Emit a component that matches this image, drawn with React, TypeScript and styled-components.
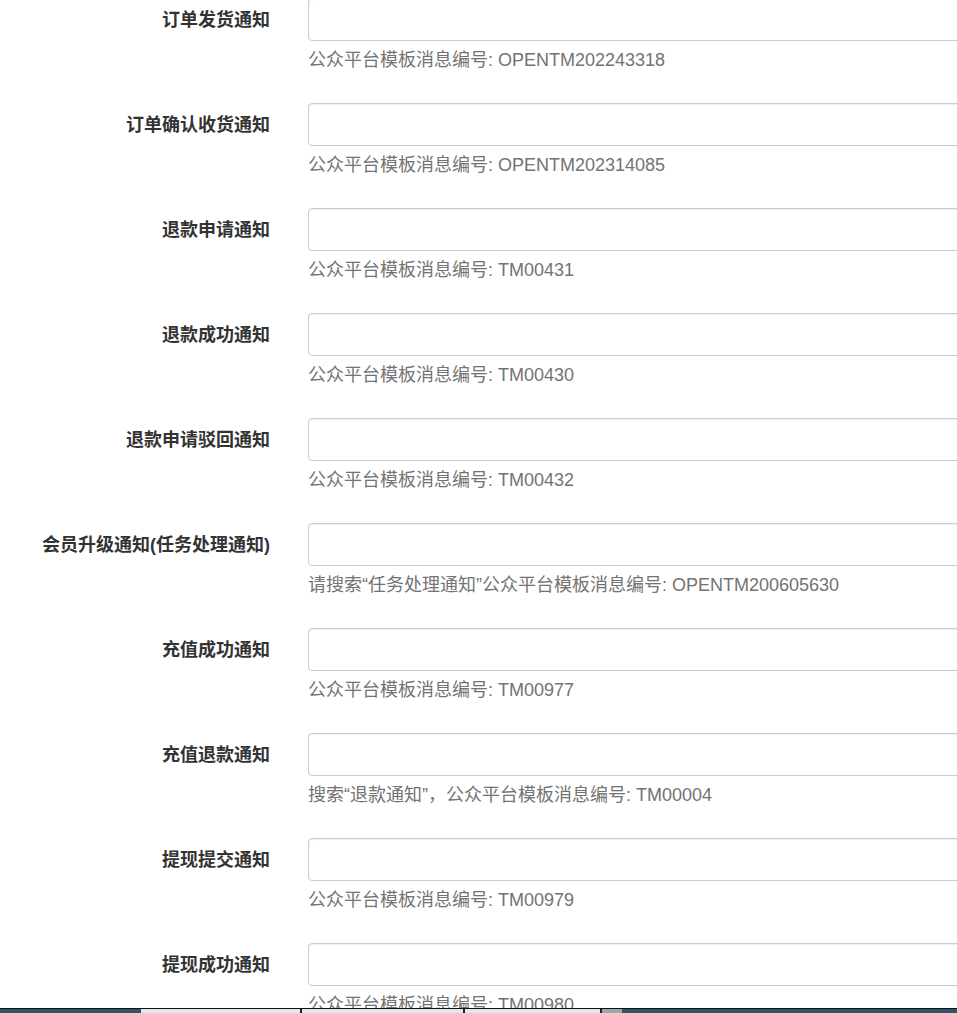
import React from 'react'
import styled, { createGlobalStyle } from 'styled-components'

interface Notice {
  label: string
  help: string
}

const notices: Notice[] = [
  { label: '订单发货通知', help: '公众平台模板消息编号: OPENTM202243318' },
  { label: '订单确认收货通知', help: '公众平台模板消息编号: OPENTM202314085' },
  { label: '退款申请通知', help: '公众平台模板消息编号: TM00431' },
  { label: '退款成功通知', help: '公众平台模板消息编号: TM00430' },
  { label: '退款申请驳回通知', help: '公众平台模板消息编号: TM00432' },
  {
    label: '会员升级通知(任务处理通知)',
    help: '请搜索“任务处理通知”公众平台模板消息编号: OPENTM200605630',
  },
  { label: '充值成功通知', help: '公众平台模板消息编号: TM00977' },
  { label: '充值退款通知', help: '搜索“退款通知”，公众平台模板消息编号: TM00004' },
  { label: '提现提交通知', help: '公众平台模板消息编号: TM00979' },
  { label: '提现成功通知', help: '公众平台模板消息编号: TM00980' },
]

const GlobalStyle = createGlobalStyle`
  html, body {
    margin: 0;
    padding: 0;
    background: #fff;
    overflow: hidden;
  }
  body {
    font-family: "Liberation Sans", "Noto Sans CJK SC", sans-serif;
    font-size: 18px;
    color: #333;
  }
`

const Form = styled('form')`
  margin-top: -2px;
  width: 100%;
  overflow: hidden;
`

const Group = styled('div')`
  display: grid;
  grid-template-columns: 270px 700px;
  column-gap: 38px;
  margin-bottom: 31px;
`

const Label = styled('label')`
  text-align: right;
  font-weight: 700;
  line-height: 24px;
  padding-top: 10px;
  white-space: nowrap;
`

const Field = styled('div')`
  display: flex;
  flex-direction: column;
`

const Input = styled('input')`
  box-sizing: border-box;
  height: 43px;
  width: 100%;
  border: 1px solid #ccc;
  border-radius: 4px;
  background: #fff;
  box-shadow: inset 0 1px 1px rgba(0, 0, 0, 0.075);
  padding: 6px 12px;
  font: inherit;
  outline: none;
`

const Help = styled('span')`
  margin-top: 7px;
  line-height: 24px;
  color: #737373;
  white-space: nowrap;
`

const Taskbar = styled('div')`
  position: fixed;
  left: 0;
  right: 0;
  bottom: 0;
  height: 4px;
  border-top: 1px solid #111;
  display: flex;
  background: #2f5566;
`

const Tab = styled('div')<{ $w: number; $tone: 'dark' | 'light' | 'fade' }>`
  width: ${(p) => p.$w}px;
  flex: none;
  background: ${(p) =>
    p.$tone === 'dark' ? '#2f5566' : p.$tone === 'fade' ? '#9aa9ae' : '#e4e7e9'};
  border-right: ${(p) => (p.$tone === 'light' ? '2px solid #222' : 'none')};
`

const App: React.FC = () => (
  <>
    <GlobalStyle />
    <Form>
      {notices.map((n) => (
        <Group key={n.label}>
          <Label>{n.label}</Label>
          <Field>
            <Input type="text" />
            <Help>{n.help}</Help>
          </Field>
        </Group>
      ))}
    </Form>
    <Taskbar>
      <Tab $w={141} $tone="dark" />
      <Tab $w={159} $tone="light" />
      <Tab $w={161} $tone="light" />
      <Tab $w={135} $tone="light" />
      <Tab $w={20} $tone="fade" />
    </Taskbar>
  </>
)

export default App
